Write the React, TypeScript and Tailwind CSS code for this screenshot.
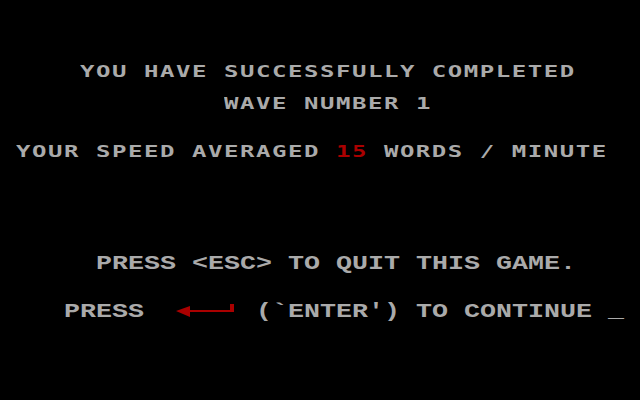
import type { ReactNode } from "react";

// 40x25 text-mode screen, every cell 16x16
function Sans({ className, children }: { className: string; children: ReactNode }) {
  return (
    <div className={className}>
      <span className="block origin-left scale-x-150 whitespace-pre font-['DejaVu_Sans_Mono',monospace] text-[16px] font-bold leading-4 tracking-[1.03px] text-[#aaaaaa]">
        {children}
      </span>
    </div>
  );
}

function Serif({ className, children }: { className: string; children: ReactNode }) {
  return (
    <div className={className}>
      <span className="block origin-left scale-x-[1.3333] whitespace-pre font-['Liberation_Mono',monospace] text-[20px] font-bold leading-4 text-[#aaaaaa]">
        {children}
      </span>
    </div>
  );
}

function EnterArrow() {
  return (
    <svg width="64" height="16" viewBox="0 0 64 16" className="block">
      <polygon points="0,7 14,2 14,13" fill="#aa0000" />
      <rect x="14" y="6" width="44" height="2" fill="#aa0000" />
      <rect x="54" y="0" width="4" height="8" fill="#aa0000" />
    </svg>
  );
}

export default function App() {
  return (
    <div className="grid h-[400px] w-[640px] grid-cols-[repeat(40,16px)] grid-rows-[repeat(25,16px)] overflow-hidden bg-black">
      <Sans className="col-span-31 col-start-6 row-start-5">YOU HAVE SUCCESSFULLY COMPLETED</Sans>
      <Sans className="col-span-13 col-start-15 row-start-7">WAVE NUMBER 1</Sans>
      <Sans className="col-span-37 col-start-2 row-start-10">
        YOUR SPEED AVERAGED <span className="text-[#aa0000]">15</span> WORDS / MINUTE
      </Sans>

      <Serif className="col-span-30 col-start-7 row-start-17">PRESS &lt;ESC&gt; TO QUIT THIS GAME.</Serif>

      <Serif className="col-span-5 col-start-5 row-start-20">PRESS</Serif>
      <div className="col-span-4 col-start-12 row-start-20">
        <EnterArrow />
      </div>
      <Serif className="col-span-23 col-start-17 row-start-20">(`ENTER') TO CONTINUE _</Serif>
    </div>
  );
}
